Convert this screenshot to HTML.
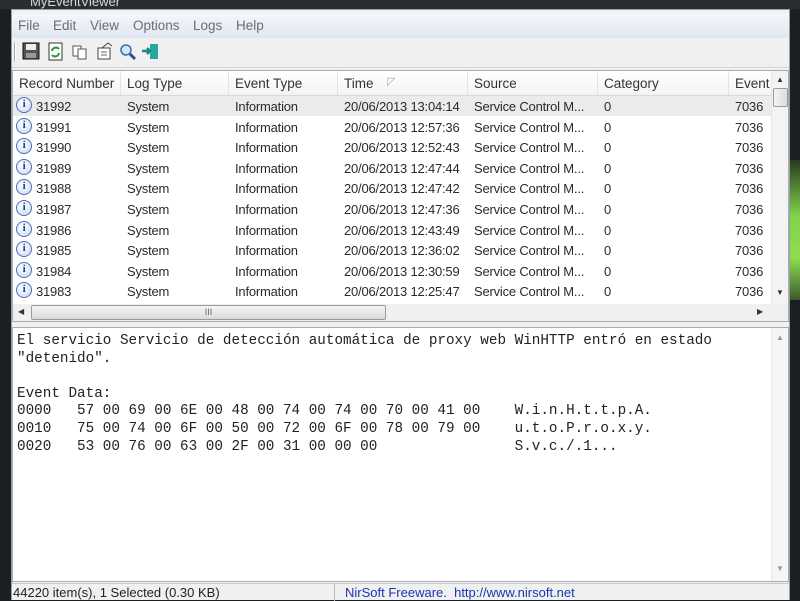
<!DOCTYPE html>
<html><head><meta charset="utf-8"><style>
*{margin:0;padding:0;box-sizing:border-box}
body{width:800px;height:600px;overflow:hidden;background:#1c1f22;position:relative;font-family:"Liberation Sans",sans-serif;color:#222}
.abs{position:absolute}
#win{left:11px;top:9px;width:779px;height:591px;background:#f0f0f0;border:1px solid #9aa0a8}
#green{left:790px;top:160px;width:10px;height:140px;background:linear-gradient(#2a3a20,#7ed34a 40%,#8fdc52 70%,#3a5a2a)}
#menu{left:12px;top:14px;width:777px;height:24px;background:linear-gradient(#f4f7fb,#dfe7f1);font-size:13.5px;color:#6b6e73}
#menu span{position:absolute;top:4px}
#tb{left:12px;top:38px;width:777px;height:30px;background:#f0f0f0;border-bottom:1px solid #d5d5d5}
#list{left:12px;top:70px;width:777px;height:252px;background:#fff;border:1px solid #a8acb2}
#hdr{left:0;top:0;width:758px;height:25px;background:linear-gradient(#fff,#f3f4f6);border-bottom:1px solid #d8d8d8;font-size:13.5px;color:#333}
.hs{position:absolute;top:0;width:1px;height:24px;background:#e3e3e3}
.row{position:absolute;left:0;width:758px;height:20px;font-size:13px;color:#2a2a2a;letter-spacing:-0.2px}
.row span{position:absolute;top:3px}
.ic{position:absolute;left:3px;top:1px;width:16px;height:16px;border-radius:50%;border:1.5px solid #4a6fb8;background:radial-gradient(circle at 40% 35%,#fff,#c9d8f2);font:bold 11px "Liberation Serif",serif;color:#1b3f9a;text-align:center;line-height:13px}
#vs{left:758px;top:0;width:17px;height:233px;background:#f3f3f3;border-left:1px solid #e6e6e6}
#hsb{left:0;top:233px;width:758px;height:17px;background:#f0f0f0}
#det{left:12px;top:327px;width:777px;height:255px;background:#fff;border:1px solid #a8acb2}
#det pre{position:absolute;left:4px;top:5px;font-family:"Liberation Mono",monospace;font-size:14.3px;line-height:17.6px;color:#222}
#status{left:12px;top:583px;width:777px;height:17px;background:#f0f0f0;border-top:1px solid #c8c8c8;font-size:13px}
</style></head><body>
<div class="abs" style="left:0;top:0;width:800px;height:9px;background:#2b2e31"></div>
<div class="abs" style="left:30px;top:-6px;font-size:13px;color:#d8d8d8">MyEventViewer</div>
<div id="green" class="abs"></div>
<div id="win" class="abs"></div>
<div id="menu" class="abs">
<span style="left:6px">File</span><span style="left:41px">Edit</span><span style="left:78px">View</span><span style="left:121px">Options</span><span style="left:181px">Logs</span><span style="left:224px">Help</span>
</div>
<div id="tb" class="abs">
<div class="abs" style="left:2px;top:4px;width:2px;height:20px;border-left:1px solid #aaa;border-right:1px solid #fff"></div>
<svg class="abs" style="left:10px;top:4px" width="150" height="22">
<rect x="1" y="1" width="16" height="16" fill="#555" stroke="#111"/><rect x="4" y="2" width="10" height="6" fill="#eee"/><rect x="4" y="11" width="10" height="5" fill="#999"/>
<rect x="27" y="1" width="13" height="17" fill="#fff" stroke="#333"/><path d="M30 9a4 4 0 0 1 7-2M37 11a4 4 0 0 1-7 2" stroke="#2a9a2a" stroke-width="2" fill="none"/>
<rect x="51" y="4" width="8" height="10" fill="#fff" stroke="#555"/><rect x="56" y="7" width="8" height="10" fill="#fff" stroke="#555"/>
<rect x="76" y="6" width="12" height="11" fill="#fff" stroke="#444"/><path d="M80 6l6-5 4 3" stroke="#444" fill="none"/><path d="M79 10h6M79 13h6" stroke="#666"/>
<circle cx="104" cy="8" r="5" fill="#cfe6f7" stroke="#3a6ea8" stroke-width="1.5"/><path d="M108 12l5 5" stroke="#2a4e9a" stroke-width="3"/>
<path d="M128 2h8v15h-8z" fill="#2aa7a0"/><path d="M120 9h8M125 6l3 3-3 3" stroke="#1a8a80" stroke-width="2.5" fill="none"/>
</svg>
</div>
<div id="list" class="abs">
<div id="hdr" class="abs">
<span class="abs" style="left:6px;top:5px">Record Number</span>
<span class="abs" style="left:114px;top:5px">Log Type</span>
<span class="abs" style="left:222px;top:5px">Event Type</span>
<span class="abs" style="left:331px;top:5px">Time</span>
<span class="abs" style="left:374px;top:4px;color:#aaa;font-size:11px">◸</span>
<span class="abs" style="left:461px;top:5px">Source</span>
<span class="abs" style="left:591px;top:5px">Category</span>
<span class="abs" style="left:722px;top:5px">Event</span>
<div class="hs" style="left:107px"></div><div class="hs" style="left:215px"></div><div class="hs" style="left:324px"></div><div class="hs" style="left:454px"></div><div class="hs" style="left:584px"></div><div class="hs" style="left:715px"></div>
</div>
<div id="rows"></div>
<div id="vs" class="abs"><div class="abs" style="left:4px;top:4px;font-size:8px;color:#333">▲</div><div class="abs" style="left:1px;top:17px;width:15px;height:19px;background:linear-gradient(90deg,#f4f4f4,#dcdcdc);border:1px solid #9a9a9a;border-radius:2px"></div><div class="abs" style="left:4px;top:217px;font-size:8px;color:#333">▼</div></div>
<div id="hsb" class="abs"><div class="abs" style="left:5px;top:3px;font-size:8px;color:#333">◀</div><div class="abs" style="left:18px;top:1px;width:355px;height:15px;background:linear-gradient(#f6f6f6,#dadada);border:1px solid #9a9a9a;border-radius:2px;font-size:9px;color:#666;text-align:center;line-height:12px">III</div><div class="abs" style="left:744px;top:3px;font-size:8px;color:#333">▶</div></div>
<div class="abs" style="left:758px;top:233px;width:17px;height:17px;background:#f0f0f0"></div>
</div>
<div id="det" class="abs">
<pre>El servicio Servicio de detección automática de proxy web WinHTTP entró en estado
"detenido".

Event Data:
0000   57 00 69 00 6E 00 48 00 74 00 74 00 70 00 41 00    W.i.n.H.t.t.p.A.
0010   75 00 74 00 6F 00 50 00 72 00 6F 00 78 00 79 00    u.t.o.P.r.o.x.y.
0020   53 00 76 00 63 00 2F 00 31 00 00 00                S.v.c./.1...</pre>
<div class="abs" style="left:758px;top:0;width:17px;height:253px;background:#f5f5f5;border-left:1px solid #e8e8e8"><div class="abs" style="left:4px;top:5px;font-size:8px;color:#999">▲</div><div class="abs" style="left:4px;top:236px;font-size:8px;color:#999">▼</div></div>
</div>
<div id="status" class="abs">
<span class="abs" style="left:1px;top:1px;color:#222">44220 item(s), 1 Selected  (0.30 KB)</span>
<div class="abs" style="left:322px;top:0;width:1px;height:17px;background:#bbb"></div>
<span class="abs" style="left:333px;top:1px;color:#1a36b0">NirSoft Freeware.&nbsp; http://www.nirsoft.net</span>
</div>
<script>
var r=document.getElementById('rows'),h='';
var t=['13:04:14','12:57:36','12:52:43','12:47:44','12:47:42','12:47:36','12:43:49','12:36:02','12:30:59','12:25:47'];
for(var i=0;i<10;i++){var y=25+i*20.6;
h+='<div class="row" style="top:'+y+'px;'+(i==0?'background:#ebebeb':'')+'"><div class="ic">i</div><span style="left:23px">'+(31992-i)+'</span><span style="left:114px">System</span><span style="left:222px">Information</span><span style="left:331px">20/06/2013 '+t[i]+'</span><span style="left:461px">Service Control M...</span><span style="left:591px">0</span><span style="left:722px">7036</span></div>';}
r.innerHTML=h;
</script>
</body></html>
